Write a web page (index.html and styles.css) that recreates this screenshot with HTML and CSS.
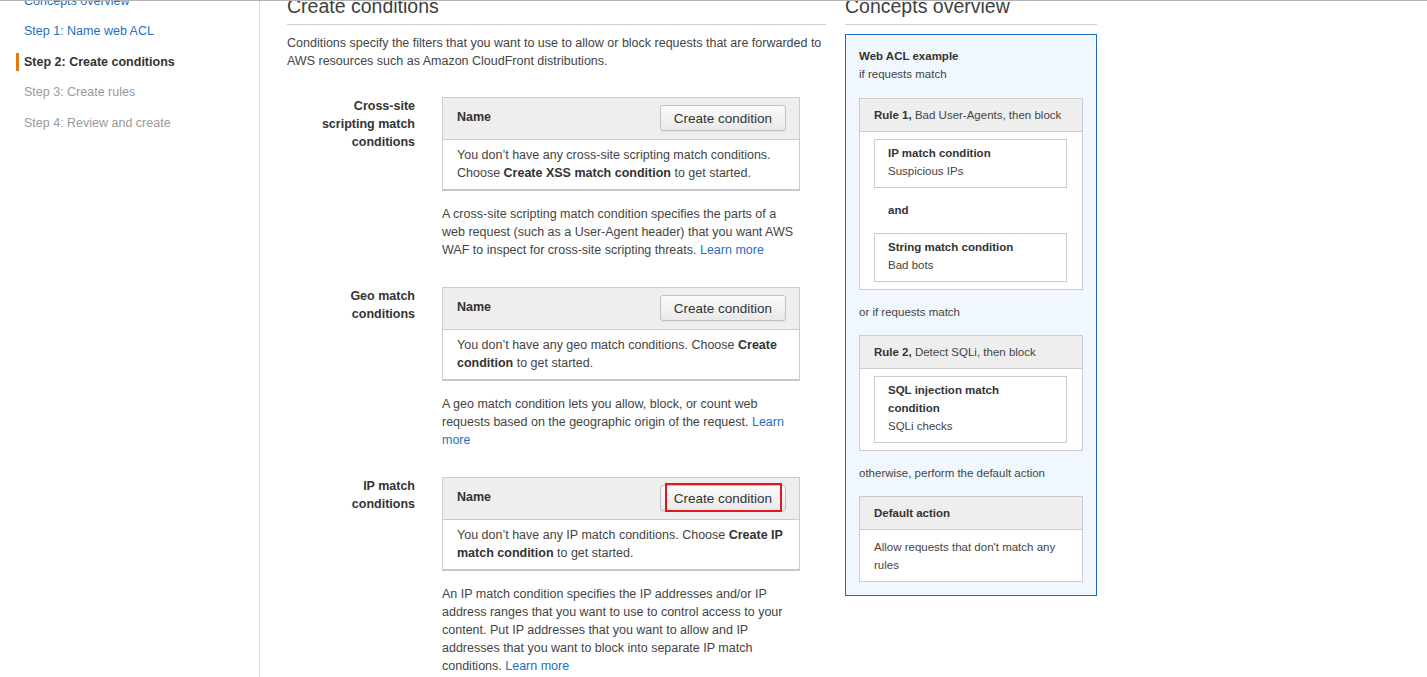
FILE: index.html
```html
<!DOCTYPE html>
<html lang="en">
<head>
<meta charset="utf-8">
<title>Create conditions</title>
<link rel="stylesheet" href="styles.css">
</head>
<body>
<div class="viewport">
  <div class="layout">
    <nav class="sidebar">
      <ul class="steps">
        <li class="step link">Concepts overview</li>
        <li class="step link">Step 1: Name web ACL</li>
        <li class="step active"><span class="active-mark">Step 2: Create conditions</span></li>
        <li class="step muted">Step 3: Create rules</li>
        <li class="step muted">Step 4: Review and create</li>
      </ul>
    </nav>
    <div class="content">
      <section class="main-col">
        <h2 class="page-title">Create conditions</h2>
        <p class="intro">Conditions specify the filters that you want to use to allow or block requests that are forwarded to AWS resources such as Amazon CloudFront distributions.</p>

        <div class="cond">
          <div class="cond-label">Cross-site scripting match conditions</div>
          <div class="cond-main">
            <div class="table">
              <div class="table-head">
                <span class="col-name">Name</span>
                <button class="btn">Create condition</button>
              </div>
              <div class="table-body">You don’t have any cross-site scripting match conditions. Choose <b>Create XSS match condition</b> to get started.</div>
            </div>
            <p class="desc">A cross-site scripting match condition specifies the parts of a web request (such as a User-Agent header) that you want AWS WAF to inspect for cross-site scripting threats. <a class="link-text">Learn more</a></p>
          </div>
        </div>

        <div class="cond">
          <div class="cond-label">Geo match conditions</div>
          <div class="cond-main">
            <div class="table">
              <div class="table-head">
                <span class="col-name">Name</span>
                <button class="btn">Create condition</button>
              </div>
              <div class="table-body">You don’t have any geo match conditions. Choose <b>Create condition</b> to get started.</div>
            </div>
            <p class="desc">A geo match condition lets you allow, block, or count web requests based on the geographic origin of the request. <a class="link-text">Learn more</a></p>
          </div>
        </div>

        <div class="cond">
          <div class="cond-label">IP match conditions</div>
          <div class="cond-main">
            <div class="table">
              <div class="table-head">
                <span class="col-name">Name</span>
                <button class="btn highlighted">Create condition<span class="highlight-box"></span></button>
              </div>
              <div class="table-body">You don’t have any IP match conditions. Choose <b>Create IP match condition</b> to get started.</div>
            </div>
            <p class="desc">An IP match condition specifies the IP addresses and/or IP address ranges that you want to use to control access to your content. Put IP addresses that you want to allow and IP addresses that you want to block into separate IP match conditions. <a class="link-text">Learn more</a></p>
          </div>
        </div>
      </section>

      <aside class="concepts">
        <h2 class="page-title">Concepts overview</h2>
        <div class="example">
          <div class="ex-title"><b>Web ACL example</b><br>if requests match</div>
          <div class="rule">
            <div class="rule-head"><b>Rule 1,</b> Bad User-Agents, then block</div>
            <div class="rule-body">
              <div class="cbox"><b>IP match condition</b><br>Suspicious IPs</div>
              <div class="and">and</div>
              <div class="cbox"><b>String match condition</b><br>Bad bots</div>
            </div>
          </div>
          <div class="ex-text">or if requests match</div>
          <div class="rule">
            <div class="rule-head"><b>Rule 2,</b> Detect SQLi, then block</div>
            <div class="rule-body">
              <div class="cbox"><b>SQL injection match condition</b><br>SQLi checks</div>
            </div>
          </div>
          <div class="ex-text">otherwise, perform the default action</div>
          <div class="rule">
            <div class="rule-head"><b>Default action</b></div>
            <div class="default-body">Allow requests that don't match any rules</div>
          </div>
        </div>
      </aside>
    </div>
  </div>
</div>
</body>
</html>
```

FILE: styles.css
```css
* { box-sizing: border-box; }

html, body {
  margin: 0;
  padding: 0;
  background: #fff;
}

body {
  font-family: "Liberation Sans", Arial, sans-serif;
  font-size: 12.5px;
  line-height: 18px;
  color: #444;
}

.viewport {
  height: 677px;
  overflow: hidden;
  border-top: 1px solid #b4b4b4;
}

.layout {
  display: flex;
  margin-top: -7px;
  height: 700px;
}

/* Sidebar */
.sidebar {
  width: 260px;
  flex: none;
  border-right: 1px solid #dcdcdc;
}

.steps {
  list-style: none;
  margin: -8.5px 0 0 0;
  padding: 0;
}

.step {
  padding: 6px 0 6px 24px;
  line-height: 18.5px;
  font-size: 12.5px;
}

.step.link { color: #1f6ec2; }
.step.muted { color: #9a9a9a; }

.step.active {
  padding-left: 16px;
  font-weight: bold;
  color: #333;
}

.active-mark {
  display: inline-block;
  line-height: 18px;
  border-left: 3px solid #e47911;
  padding-left: 5px;
}

/* Content */
.content {
  display: flex;
  gap: 19px;
  padding-left: 27px;
}

.main-col {
  width: 539px;
  flex: none;
}

.page-title {
  margin: 0;
  font-size: 19.5px;
  line-height: 24px;
  font-weight: normal;
  color: #404040;
  padding-bottom: 6px;
  border-bottom: 1px solid #cfcfcf;
}

.intro {
  margin: 9px 0 27px;
}

.cond {
  display: grid;
  grid-template-columns: 128px 358px;
  column-gap: 27px;
  margin-bottom: 28px;
}

.cond-label {
  text-align: right;
  font-weight: bold;
  color: #333;
  padding-left: 28px;
}

.table {
  border: 1px solid #cccccc;
  border-bottom: 2px solid #c8c8c8;
}

.table-head {
  display: flex;
  justify-content: space-between;
  align-items: flex-start;
  background: #eeeeee;
  padding: 7px 13px 8px 14px;
  border-bottom: 1px solid #cccccc;
}

.col-name {
  font-weight: bold;
  color: #333;
  padding-top: 3px;
}

.btn {
  position: relative;
  height: 26px;
  padding: 0 13px;
  font-family: "Liberation Sans", Arial, sans-serif;
  font-size: 13.5px;
  color: #333;
  background: linear-gradient(#fbfbfb, #e9e9e9);
  border: 1px solid #c2c2c2;
  border-radius: 3px;
  box-shadow: 0 1px 0 rgba(0,0,0,0.06);
}

.highlight-box {
  position: absolute;
  left: 4px;
  right: 3px;
  top: -3px;
  bottom: -2px;
  border: 2px solid #e2141f;
}

.table-body {
  padding: 6px 13px 7px 14px;
  background: #fff;
}

.table-body b { color: #333; }

.desc {
  margin: 14px 0 0;
}

.link-text { color: #1f6ec2; }

/* Concepts */
.concepts {
  width: 252px;
  flex: none;
}

.example {
  margin-top: 9px;
  border: 1px solid #1a6cc3;
  background: #f0f7fe;
  padding: 12px 13px 13px 13px;
  font-size: 11.5px;
  line-height: 18px;
}

.example b { color: #333; }

.ex-title { margin-bottom: 15px; }

.rule {
  border: 1px solid #cccccc;
  background: #fff;
}

.rule-head {
  background: #eeeeee;
  border-bottom: 1px solid #cccccc;
  padding: 7px 14px;
}

.rule-body {
  padding: 7px 15px 7px 14px;
}

.cbox {
  border: 1px solid #cccccc;
  padding: 4px 13px 7px 13px;
}

.and {
  font-weight: bold;
  color: #333;
  padding: 13px 14px 14px;
}

.ex-text {
  margin: 13px 0 14px;
}

.default-body {
  padding: 8px 14px 7px;
}
```
